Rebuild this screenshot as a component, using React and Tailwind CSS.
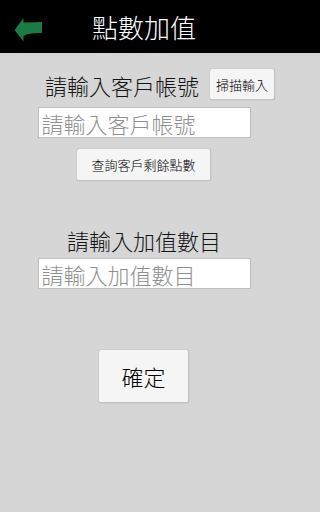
import React from 'react'

const font = { fontFamily: '"Noto Sans CJK TC", "Noto Sans", sans-serif' }

function BackArrow() {
  return (
    <svg width="32" height="28" viewBox="12 16 32 28" className="shrink-0">
      <path d="M14.5 30 L23.5 18 L23.5 22.5 L42 22 L42 33 L31 33.5 Q26 34 23.5 36 L23.5 41.5 Z" fill="#1b7a45" />
    </svg>
  )
}

function Btn({ children, className }) {
  return (
    <button className={`bg-[#f5f5f5] text-black rounded-[2px] border-b border-r border-[#c4c4c4] shadow-[0_0_1px_rgba(0,0,0,0.35)] ${className}`}>
      {children}
    </button>
  )
}

function Field({ placeholder }) {
  return (
    <input
      placeholder={placeholder}
      className="block mx-auto w-[213px] h-[31px] bg-white border border-[#bdbdbd] pl-[3px] text-[22px] font-light leading-none text-black placeholder:text-[#8f8f8f] outline-none"
    />
  )
}

export default function App() {
  return (
    <div className="w-full min-h-screen flex flex-col bg-[#d6d6d6] font-light" style={font}>
      <div className="h-[53px] bg-black shrink-0">
        <div className="w-[288px] h-full flex items-center relative">
          <div className="absolute left-[12px] top-[16px]">
            <BackArrow />
          </div>
          <h1 className="flex-1 text-center text-white text-[26px] leading-none font-light">點數加值</h1>
        </div>
      </div>

      <div className="w-[288px] flex flex-col">
        <div className="mt-[16px] pl-[45px] flex items-center gap-[11px] h-[31px]">
          <span className="text-[22px] leading-none text-[#141414]">請輸入客戶帳號</span>
          <Btn className="w-[65px] h-[31px] text-[13px] leading-none">掃描輸入</Btn>
        </div>

        <div className="mt-[7px]">
          <Field placeholder="請輸入客戶帳號" />
        </div>

        <Btn className="mt-[11px] mx-auto w-[134px] h-[32px] text-[13px] leading-none">查詢客戶剩餘點數</Btn>

        <div className="mt-[44px] h-[30px] flex items-center justify-center">
          <span className="text-[22px] leading-none text-[#141414]">請輸入加值數目</span>
        </div>

        <div className="mt-[3px]">
          <Field placeholder="請輸入加值數目" />
        </div>

        <Btn className="mt-[61px] mx-auto w-[90px] h-[53px] text-[22px] leading-none">確定</Btn>
      </div>
    </div>
  )
}
